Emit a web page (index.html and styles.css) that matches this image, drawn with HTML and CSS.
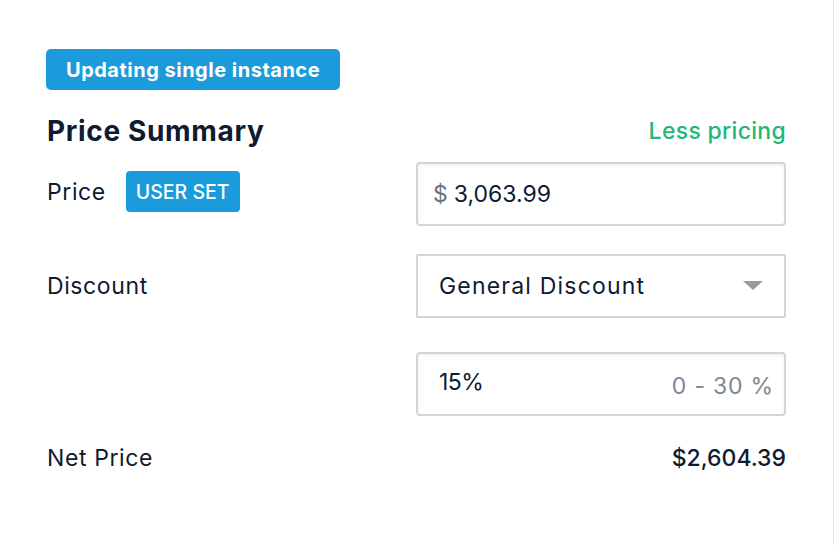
FILE: index.html
```html
<!DOCTYPE html>
<html>
<head>
<meta charset="utf-8">
<link rel="stylesheet" href="styles.css">
</head>
<body>
<div class="panel">
  <div class="mode-badge">Updating single instance</div>
  <div class="head-row">
    <h2 class="title">Price Summary</h2>
    <a class="toggle">Less pricing</a>
  </div>
  <div class="row row-price">
    <div class="label-group">
      <span class="label">Price</span>
      <span class="tag">USER SET</span>
    </div>
    <div class="field field-input">
      <span class="prefix">$</span>
      <span class="value">3,063.99</span>
    </div>
  </div>
  <div class="row row-discount">
    <span class="label">Discount</span>
    <div class="field field-select">
      <span class="value">General Discount</span>
      <span class="caret"></span>
    </div>
  </div>
  <div class="row row-percent">
    <span class="label"></span>
    <div class="field field-input field-percent">
      <span class="value">15%</span>
      <span class="hint">0 - 30 %</span>
    </div>
  </div>
  <div class="row row-net">
    <span class="label">Net Price</span>
    <span class="net">$2,604.39</span>
  </div>
</div>
</body>
</html>
```

FILE: styles.css
```css
html, body {
  margin: 0;
  padding: 0;
  background: #ffffff;
}
body {
  font-family: "Inter", "Liberation Sans", sans-serif;
  color: #0e1b31;
}
.panel {
  width: 834px;
  height: 545px;
  box-sizing: border-box;
  border-right: 1px solid #e6e6e9;
  padding: 49px 47px 0 46px;
}
.mode-badge {
  display: inline-flex;
  align-items: center;
  height: 41px;
  padding: 0 20px;
  background: #1b9bdb;
  color: #ffffff;
  font-weight: 700;
  font-size: 20px;
  border-radius: 5px;
  letter-spacing: 0.5px;
}
.head-row {
  display: flex;
  justify-content: space-between;
  align-items: center;
  margin-top: 22px;
  height: 38px;
}
.title {
  margin: 0 0 0 1px;
  font-size: 28px;
  font-weight: 700;
  letter-spacing: 0.65px;
}
.toggle {
  color: #1db877;
  font-size: 23px;
  font-weight: 500;
  letter-spacing: 0.3px;
}
.row {
  display: flex;
  justify-content: space-between;
  align-items: center;
}
.row-price {
  margin-top: 12px;
  align-items: flex-start;
}
.label-group {
  display: flex;
  align-items: center;
  gap: 20px;
  margin-top: 9px;
  height: 41px;
}
.label {
  margin-left: 1px;
  font-size: 23px;
  font-weight: 400;
  letter-spacing: 0.6px;
}
.tag {
  display: inline-flex;
  align-items: center;
  height: 41px;
  padding: 0 10px;
  background: #1b9bdb;
  color: #ffffff;
  font-size: 19.5px;
  font-weight: 500;
  border-radius: 4px;
  letter-spacing: 0;
}
.field {
  width: 370px;
  height: 64px;
  box-sizing: border-box;
  border: 2px solid #d3d3d9;
  display: flex;
  align-items: center;
  font-size: 23px;
}
.field-input {
  border-radius: 4px;
  box-shadow: inset 0 2px 3px rgba(0, 0, 0, 0.05);
  padding: 0 10px 0 15px;
}
.prefix {
  color: #6a727b;
  margin-right: 6px;
}
.row-discount {
  margin-top: 28px;
}
.field-select {
  border-radius: 2px;
  padding: 0 21px 0 21px;
  justify-content: space-between;
}
.field-select .value {
  letter-spacing: 1.2px;
}
.caret {
  width: 0;
  height: 0;
  border-left: 10px solid transparent;
  border-right: 10px solid transparent;
  border-top: 9px solid #9a9a9a;
  margin-top: -2px;
}
.row-percent {
  margin-top: 34px;
}
.field-percent {
  justify-content: space-between;
  padding-left: 21px;
}
.field-percent .value {
  margin-top: -4px;
  letter-spacing: -0.5px;
}
.hint {
  color: #808891;
  letter-spacing: 0.8px;
  margin-top: 3px;
}
.row-net {
  margin-top: 27px;
  height: 30px;
}
.net {
  font-size: 23px;
  font-weight: 500;
}
```
